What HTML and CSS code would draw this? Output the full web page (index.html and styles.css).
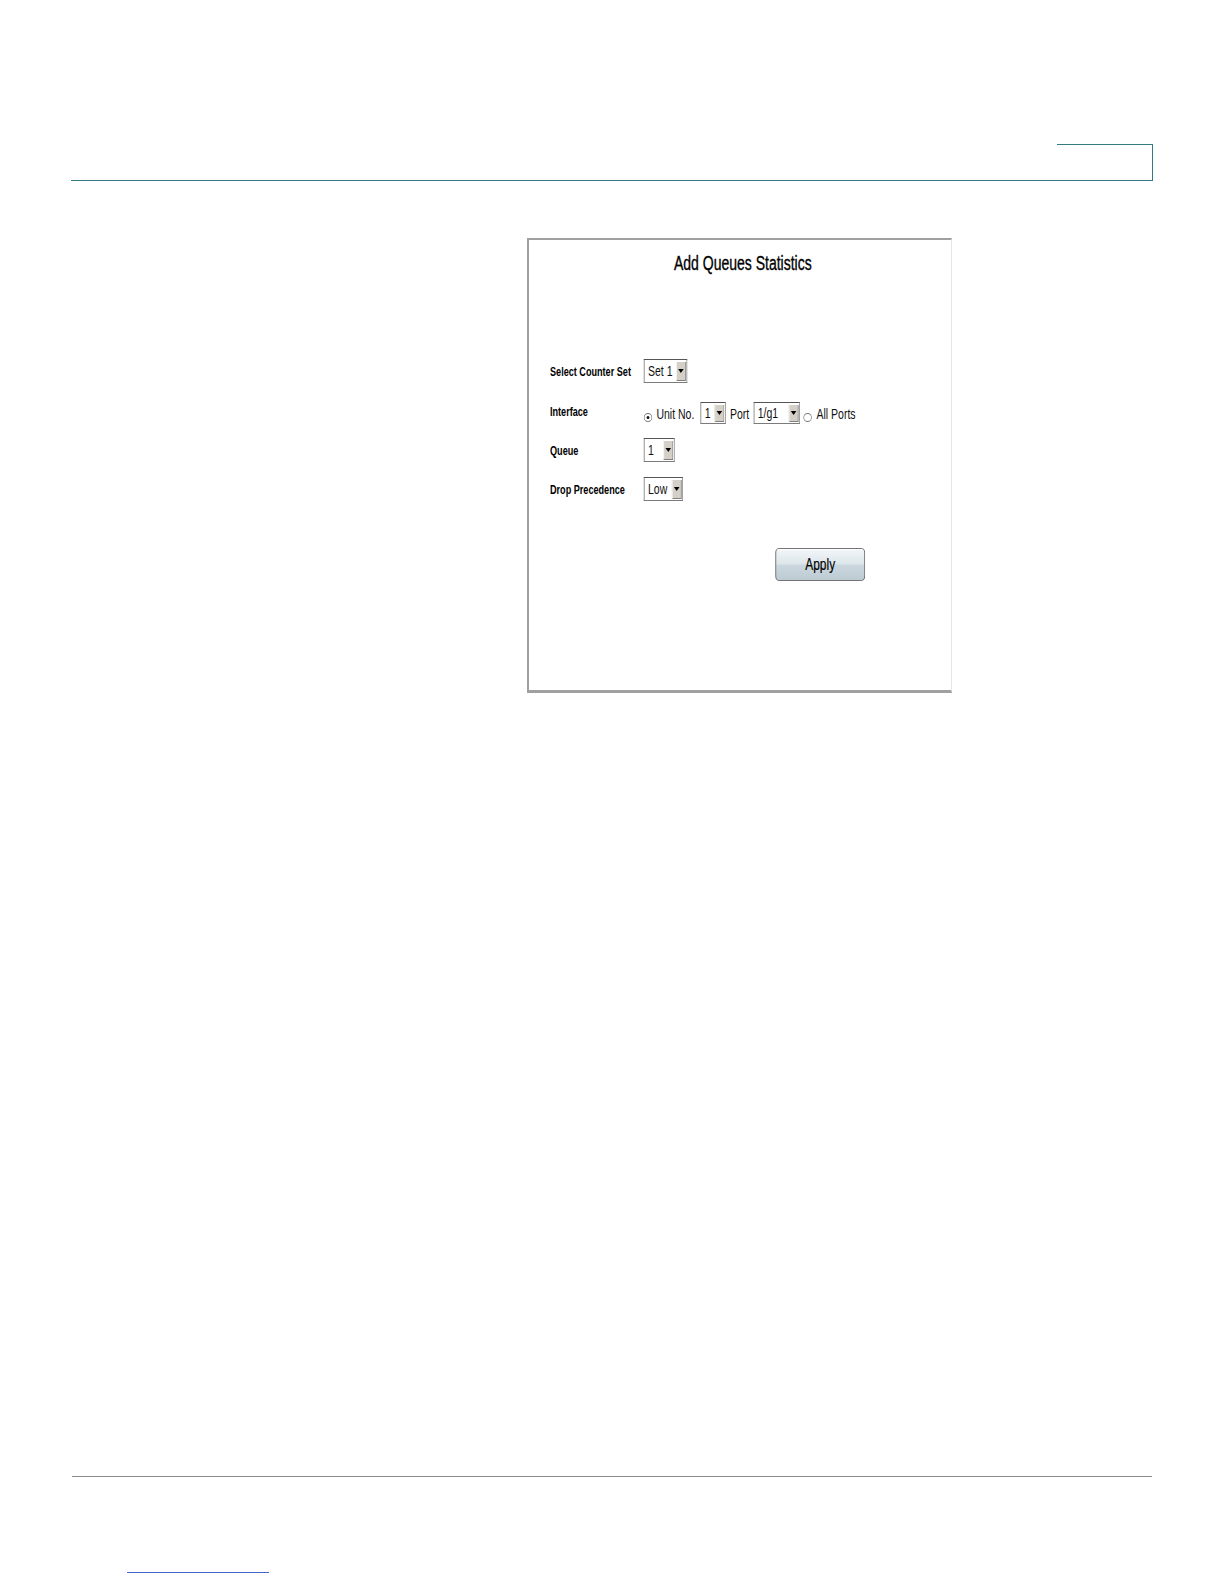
FILE: index.html
```html
<!DOCTYPE html>
<html lang="en">
<head>
<meta charset="utf-8">
<title>Add Queues Statistics</title>
<link rel="stylesheet" href="styles.css">
</head>
<body>
<header class="page-header"><div class="tab"></div></header>

<div class="panel">
  <div class="panel-inner">
    <h1 class="title">Add Queues Statistics</h1>
    <div class="form">
      <div class="row">
        <span class="label">Select Counter Set</span>
        <div class="controls">
          <span class="select w-set"><span class="select-text">Set 1</span><span class="select-btn"><span class="arrow"></span></span></span>
        </div>
      </div>
      <div class="row row-iface">
        <span class="label">Interface</span>
        <div class="controls">
          <span class="radio checked"></span>
          <span class="ctl-text t-unit">Unit No.</span>
          <span class="select small w-unit"><span class="select-text">1</span><span class="select-btn"><span class="arrow"></span></span></span>
          <span class="ctl-text t-port">Port</span>
          <span class="select small w-port"><span class="select-text">1/g1</span><span class="select-btn"><span class="arrow"></span></span></span>
          <span class="radio r-all"></span>
          <span class="ctl-text t-all">All Ports</span>
        </div>
      </div>
      <div class="row">
        <span class="label">Queue</span>
        <div class="controls">
          <span class="select w-queue"><span class="select-text">1</span><span class="select-btn"><span class="arrow"></span></span></span>
        </div>
      </div>
      <div class="row">
        <span class="label">Drop Precedence</span>
        <div class="controls">
          <span class="select w-low"><span class="select-text">Low</span><span class="select-btn"><span class="arrow"></span></span></span>
        </div>
      </div>
    </div>
    <div class="actions"><button class="btn" type="button">Apply</button></div>
  </div>
</div>

<footer class="page-footer"><span class="footer-link"></span></footer>
</body>
</html>
```

FILE: styles.css
```css
html, body {
  margin: 0;
  padding: 0;
  background: #ffffff;
}

body {
  font-family: "Liberation Sans", Arial, sans-serif;
  color: #000;
}

.page-header {
  margin: 144px 71px 0 71px;
  height: 36px;
  border-bottom: 1px solid #337a84;
  display: flex;
  justify-content: flex-end;
}

.tab {
  width: 95px;
  border-top: 1px solid #337a84;
  border-right: 1px solid #337a84;
}

.panel {
  margin: 57px 0 0 527px;
  width: 422px;
  height: 450px;
  border-left: 2px solid #a0a0a0;
  border-top: 2px solid #a0a0a0;
  border-bottom: 3px solid #a0a0a0;
  border-right: 1px solid #e6e6e6;
  overflow: hidden;
}

.panel-inner {
  width: 601px;
  padding-top: 11px;
  transform: scaleX(0.7);
  transform-origin: 0 0;
}

.title {
  margin: 0;
  padding-left: 10px;
  text-align: center;
  font-size: 20px;
  font-weight: normal;
  line-height: 24px;
  color: #000;
  -webkit-text-stroke: 0.35px #000;
}

.form {
  margin-top: 84px;
  padding-left: 30px;
  display: flex;
  flex-direction: column;
  gap: 15px;
}

.row {
  display: flex;
  align-items: center;
  height: 24px;
}

.row-iface {
  margin-top: 1px;
}

.label {
  width: 134px;
  flex: none;
  font-size: 13px;
  font-weight: bold;
  padding-top: 1px;
  color: #000;
}

.controls {
  display: flex;
  align-items: center;
  font-size: 15px;
  color: #111;
}

.row-iface .controls {
  padding-top: 4px;
}

.ctl-text {
  font-size: 15px;
  white-space: nowrap;
  padding-top: 1px;
}

.t-unit { margin-left: 6px; }
.t-port { margin-left: 6px; }
.t-all { margin-left: 7px; }

.select {
  display: flex;
  height: 24px;
  box-sizing: border-box;
  border: 1px solid #7b7b7b;
  border-top-color: #555;
  border-left-color: #666;
  background: #fff;
  padding: 1px;
}

.select.small {
  height: 22px;
}

.select-text {
  flex: 1;
  padding-left: 4px;
  font-size: 15px;
  line-height: 20px;
  white-space: nowrap;
}

.select.small .select-text {
  line-height: 18px;
}

.select-btn {
  width: 14px;
  flex: none;
  background: #d4d0c8;
  box-shadow: inset 1px 1px #ffffff, inset -1px -1px #7f7f7f;
  display: flex;
  align-items: center;
  justify-content: center;
}

.arrow {
  width: 0;
  height: 0;
  border-left: 4px solid transparent;
  border-right: 4px solid transparent;
  border-top: 4px solid #000;
}

.w-set { width: 62px; }
.w-unit { width: 36px; margin-left: 9px; }
.w-port { width: 66px; margin-left: 6px; }
.w-queue { width: 44px; }
.w-low { width: 56px; }

.radio {
  width: 12px;
  height: 9px;
  box-sizing: border-box;
  border: 1px solid #7a7a7a;
  border-radius: 50%;
  background: #fff;
  margin-top: 8px;
  flex: none;
  position: relative;
}

.radio.checked::after {
  content: "";
  position: absolute;
  left: 3px;
  top: 2px;
  width: 4px;
  height: 3px;
  border-radius: 50%;
  background: #111;
}

.r-all { margin-left: 5px; }

.actions {
  margin-top: 47px;
}

.btn {
  margin-left: 352px;
  width: 128px;
  height: 33px;
  padding: 0;
  border: 1px solid #5b5b5b;
  border-radius: 5px;
  background: linear-gradient(#f2f6f8, #dde6eb 48%, #cbd7de 52%, #bccbd3);
  box-shadow: inset 0 1px #ffffff;
  font-family: "Liberation Sans", Arial, sans-serif;
  font-size: 17px;
  color: #000;
  -webkit-text-stroke: 0.2px #000;
}

.page-footer {
  margin: 783px 72px 0 72px;
  border-top: 1px solid #8a8a8a;
}

.footer-link {
  display: block;
  margin: 95px 0 0 55px;
  width: 142px;
  height: 1px;
  background: #4466cc;
}
```
